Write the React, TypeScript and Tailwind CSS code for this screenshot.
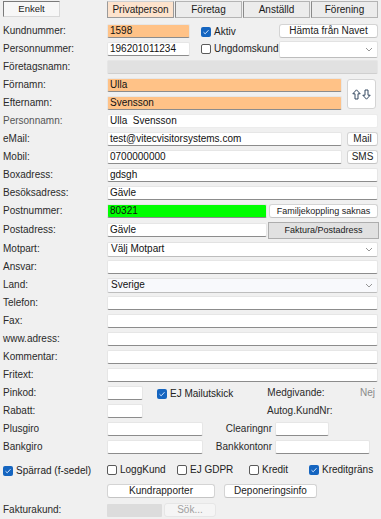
import React from "react";

const F = { fontFamily: '"Liberation Sans", Arial, sans-serif' };

function Check({ checked }: { checked?: boolean }) {
  return checked ? (
    <span className="inline-flex w-[10px] h-[10px] rounded-[2px] bg-[#1565c0] items-center justify-center shrink-0">
      <svg width="8" height="8" viewBox="0 0 8 8">
        <path d="M1.5 4.2 L3.2 5.8 L6.5 2.2" fill="none" stroke="#cfe3ff" strokeWidth="1" />
      </svg>
    </span>
  ) : (
    <span className="inline-block w-[10px] h-[10px] rounded-[2px] bg-white border border-[#5a5a5a] shrink-0" />
  );
}

function CheckLabel({ checked, label }: { checked?: boolean; label: string }) {
  return (
    <span className="inline-flex items-center gap-[3px] text-[10px] text-[#222] leading-none">
      <Check checked={checked} />
      <span>{label}</span>
    </span>
  );
}

function Input({
  w,
  bg = "bg-white",
  children,
  className = "",
}: {
  w: string;
  bg?: string;
  children?: React.ReactNode;
  className?: string;
}) {
  return (
    <div
      className={`${w} ${bg} h-[14px] rounded-[2px] border border-[#e6e6e6] border-b-[#8c8c8c] flex items-center px-[2px] text-[10px] text-[#111] leading-none overflow-hidden whitespace-nowrap ${className}`}
    >
      {children}
    </div>
  );
}

function Chevron() {
  return (
    <svg width="8" height="5" viewBox="0 0 8 5" className="shrink-0">
      <path d="M1 1 L4 4 L7 1" fill="none" stroke="#8a8a8a" strokeWidth="0.9" />
    </svg>
  );
}

function Select({ w, children, bg = "bg-white", h = "h-[15px]" }: { w: string; children?: React.ReactNode; bg?: string; h?: string }) {
  return (
    <div
      className={`${w} ${h} ${bg} rounded-[2px] border border-[#e2e2e2] border-b-[#bdbdbd] flex items-center justify-between pl-[3px] pr-[4px] text-[10px] text-[#111] leading-none`}
    >
      <span>{children}</span>
      <Chevron />
    </div>
  );
}

function Btn({
  w,
  children,
  className = "",
  size = "text-[10px]",
}: {
  w: string;
  children: React.ReactNode;
  className?: string;
  size?: string;
}) {
  return (
    <div
      className={`${w} ${size} h-[14px] rounded-[3px] bg-white border border-[#d4d4d4] border-b-[#c4c4c4] flex items-center justify-center text-[#222] leading-none whitespace-nowrap ${className}`}
    >
      {children}
    </div>
  );
}

function Row({
  label,
  h = "h-[18px]",
  children,
  labelClass = "text-[#2a2a2a]",
}: {
  label: string;
  h?: string;
  children?: React.ReactNode;
  labelClass?: string;
}) {
  return (
    <div className={`flex items-center ${h}`}>
      <div className={`w-[107px] pl-[3px] text-[10px] leading-none ${labelClass}`}>{label}</div>
      <div className="flex items-center flex-1 pr-[3px]">{children}</div>
    </div>
  );
}

export default function App() {
  const orange = "bg-[#ffc287]";
  return (
    <div className="w-[381px] h-[519px] bg-[#f0f0f0] overflow-hidden" style={F}>
      {/* top tabs */}
      <div className="flex items-start h-[22px] pt-[1px]">
        <div className="ml-[3px] w-[57px] h-[16px] bg-[#f7f7f7] border-l border-t border-[#7a7a7a] border-r border-r-[#d8d8d8] border-b border-b-[#d8d8d8] flex items-center justify-center text-[9.5px] text-[#222] leading-none">
          Enkelt
        </div>
        <div className="ml-[47px] flex gap-[1px]">
          <div className="w-[67px] h-[17px] bg-[#fde3cd] border border-[#9a9a9a] border-t-[#d0d0d0] flex items-center justify-center text-[10px] text-[#1a1a1a] leading-none">
            Privatperson
          </div>
          {["Företag", "Anställd", "Förening"].map((t) => (
            <div
              key={t}
              className="w-[67px] h-[17px] bg-[#ececec] border border-[#b4b4b4] border-l-[#8a8a8a] flex items-center justify-center text-[10px] text-[#1a1a1a] leading-none"
            >
              {t}
            </div>
          ))}
        </div>
      </div>

      <Row label="Kundnummer:">
        <Input w="w-[83px]" bg={orange}>1598</Input>
        <span className="ml-[11px]">
          <CheckLabel checked label="Aktiv" />
        </span>
        <Btn w="w-[99px]" className="ml-auto">Hämta från Navet</Btn>
      </Row>
      <Row label="Personnummer:">
        <Input w="w-[83px]">196201011234</Input>
        <span className="ml-[11px]">
          <CheckLabel label="Ungdomskund" />
        </span>
        <div className="ml-auto">
          <Select w="w-[99px]" h="h-[17px]" />
        </div>
      </Row>
      <Row label="Företagsnamn:">
        <Input w="w-[271px]" bg="bg-[#e1e1e1]" className="border-[#dedede] border-b-[#cfcfcf]" />
      </Row>

      {/* Förnamn / Efternamn */}
      <div className="flex items-center h-[36px]">
        <div className="w-[107px] pl-[3px] flex flex-col text-[10px] leading-none text-[#2a2a2a]">
          <div className="h-[18px] flex items-center">Förnamn:</div>
          <div className="h-[18px] flex items-center">Efternamn:</div>
        </div>
        <div className="flex flex-col w-[235px]">
          <div className="h-[18px] flex items-center">
            <Input w="w-[235px]" bg={orange}>Ulla</Input>
          </div>
          <div className="h-[18px] flex items-center">
            <Input w="w-[235px]" bg={orange}>Svensson</Input>
          </div>
        </div>
        <div className="ml-[5px] w-[29px] h-[30px] rounded-[3px] bg-white border border-[#d4d4d4] flex items-center justify-center gap-[1px]">
          <svg width="9" height="11" viewBox="0 0 9 11">
            <path d="M4.5 0.8 L8.2 4.8 L6 4.8 L6 10 L3 10 L3 4.8 L0.8 4.8 Z" fill="none" stroke="#1f3550" strokeWidth="0.9" />
          </svg>
          <svg width="9" height="11" viewBox="0 0 9 11">
            <path d="M4.5 10.2 L8.2 6.2 L6 6.2 L6 1 L3 1 L3 6.2 L0.8 6.2 Z" fill="none" stroke="#1f3550" strokeWidth="0.9" />
          </svg>
        </div>
      </div>

      <Row label="Personnamn:" labelClass="text-[#555]">
        <Input w="w-[271px]" className="border-[#ececec] border-b-[#ececec] text-[#8a8a8a]">
          Ulla&nbsp;&nbsp;Svensson
        </Input>
      </Row>
      <Row label="eMail:">
        <Input w="w-[235px]">test@vitecvisitorsystems.com</Input>
        <Btn w="w-[31px]" className="ml-auto">Mail</Btn>
      </Row>
      <Row label="Mobil:">
        <Input w="w-[235px]">0700000000</Input>
        <Btn w="w-[31px]" className="ml-auto">SMS</Btn>
      </Row>
      <Row label="Boxadress:">
        <Input w="w-[271px]">gdsgh</Input>
      </Row>
      <Row label="Besöksadress:">
        <Input w="w-[271px]">Gävle</Input>
      </Row>
      <Row label="Postnummer:">
        <Input w="w-[160px]" bg="bg-[#00ff00]" className="border-[#00e000]">80321</Input>
        <Btn w="w-[109px]" size="text-[9px]" className="ml-auto">Familjekoppling saknas</Btn>
      </Row>
      <Row label="Postadress:" h="h-[20px]">
        <Input w="w-[160px]">Gävle</Input>
        <div className="ml-auto w-[111px] h-[17px] -mr-[1px] bg-[#e1e1e1] border border-[#adadad] flex items-center justify-center text-[9px] text-[#1a1a1a] leading-none">
          Faktura/Postadress
        </div>
      </Row>
      <Row label="Motpart:">
        <Select w="w-[271px]">Välj Motpart</Select>
      </Row>
      <Row label="Ansvar:">
        <Input w="w-[271px]" />
      </Row>
      <Row label="Land:">
        <Select w="w-[271px]" bg="bg-[#f8f9fc]">Sverige</Select>
      </Row>
      <Row label="Telefon:">
        <Input w="w-[271px]" />
      </Row>
      <Row label="Fax:">
        <Input w="w-[271px]" />
      </Row>
      <Row label="www.adress:">
        <Input w="w-[271px]" />
      </Row>
      <Row label="Kommentar:">
        <Input w="w-[271px]" />
      </Row>
      <Row label="Fritext:">
        <Input w="w-[271px]" />
      </Row>
      <Row label="Pinkod:">
        <Input w="w-[36px]" />
        <span className="ml-[14px]">
          <CheckLabel checked label="EJ Mailutskick" />
        </span>
        <span className="ml-[34px] text-[10px] text-[#2a2a2a] leading-none">Medgivande:</span>
        <span className="ml-auto mr-[3px] text-[10px] text-[#8a8a8a] leading-none">Nej</span>
      </Row>
      <Row label="Rabatt:">
        <Input w="w-[36px]" />
        <span className="ml-[124px] text-[10px] text-[#2a2a2a] leading-none">Autog.KundNr:</span>
      </Row>
      <Row label="Plusgiro">
        <Input w="w-[96px]" />
        <span className="w-[72px] pr-[3px] text-right text-[10px] text-[#2a2a2a] leading-none">Clearingnr</span>
        <Input w="w-[54px]" />
      </Row>
      <Row label="Bankgiro">
        <Input w="w-[96px]" />
        <span className="w-[72px] pr-[3px] text-right text-[10px] text-[#2a2a2a] leading-none">Bankkontonr</span>
        <Input w="w-[95px]" />
      </Row>

      {/* checkbox row */}
      <div className="flex items-center h-[28px]">
        <div className="w-[107px] pl-[3px]">
          <CheckLabel checked label="Spärrad (f-sedel)" />
        </div>
        <div className="w-[70px]">
          <CheckLabel label="LoggKund" />
        </div>
        <div className="w-[72px]">
          <CheckLabel label="EJ GDPR" />
        </div>
        <div className="w-[60px]">
          <CheckLabel label="Kredit" />
        </div>
        <CheckLabel checked label="Kreditgräns" />
      </div>

      <div className="flex items-center h-[14px]">
        <div className="w-[107px]" />
        <Btn w="w-[108px]">Kundrapporter</Btn>
        <Btn w="w-[93px]" className="ml-[9px]">Deponeringsinfo</Btn>
      </div>

      <div className="flex items-center h-[14px] mt-[5px]">
        <div className="w-[107px] pl-[3px] text-[10px] text-[#2a2a2a] leading-none">Fakturakund:</div>
        <div className="w-[55px] h-[13px] bg-[#dcdcdc] rounded-[1px]" />
        <div className="ml-[2px] w-[52px] h-[14px] rounded-[3px] bg-[#f5f5f5] border border-[#e6e6e6] flex items-center justify-center text-[10px] text-[#a0a0a0] leading-none">
          Sök...
        </div>
      </div>
    </div>
  );
}
